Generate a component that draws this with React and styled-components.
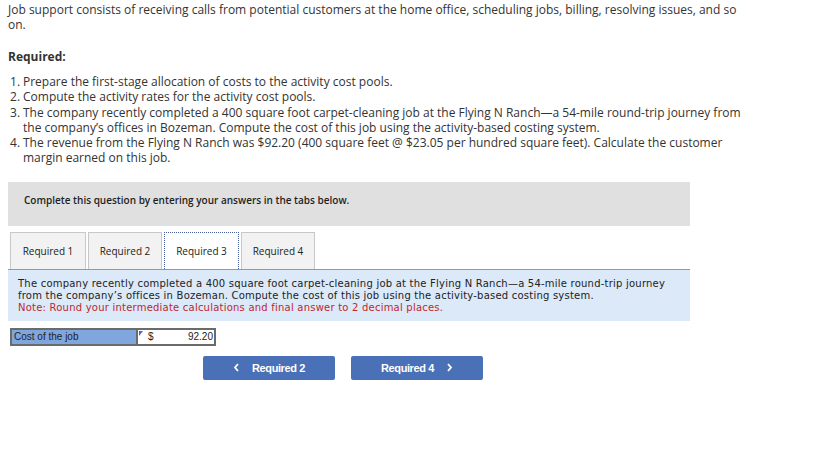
import React from "react";
import styled, { createGlobalStyle } from "styled-components";

const GlobalStyle = createGlobalStyle`
  body {
    margin: 0;
    background: #fff;
  }
`;

const Page = styled.div`
  padding: 2px 8px 20px 8px;
  font-family: "Open Sans", Lato, sans-serif;
  font-size: 12px;
  color: #333;
`;

const Intro = styled.p`
  margin: 0;
  width: 745px;
  line-height: 15px;
`;

const Heading = styled.div`
  margin-top: 17px;
  font-weight: bold;
  line-height: 15px;
`;

const List = styled.ol`
  list-style: none;
  margin: 10px 0 0 0;
  padding: 0;
  width: 745px;
`;

const Item = styled.li`
  display: flex;
  line-height: 15.3px;
`;

const Num = styled.span`
  flex: 0 0 13px;
  padding-left: 2px;
`;

const Panel = styled.div`
  width: 682px;
  margin-top: 16px;
`;

const Banner = styled.div`
  height: 44px;
  box-sizing: border-box;
  padding: 11px 0 0 16px;
  background: #e0e0e0;
  font-family: "Open Sans", sans-serif;
  font-weight: 600;
  font-size: 10px;
  color: #1e1e1e;
`;

const Tabs = styled.div`
  display: flex;
  gap: 2px;
  margin-top: 6px;
  padding-left: 2px;
`;

const Tab = styled.div`
  height: 37px;
  width: ${(p) => p.$w}px;
  box-sizing: border-box;
  display: flex;
  align-items: center;
  justify-content: center;
  background: ${(p) => (p.$active ? "#fff" : "#f2f2f2")};
  border: 1px ${(p) => (p.$active ? "dotted #4a5fa0" : "solid #c8c8c8")};
  border-bottom: none;
  font-family: "Open Sans", sans-serif;
  font-size: 10px;
  color: #222;
`;

const Content = styled.div`
  background: #dce9f8;
  border-top: 1px solid #999;
  padding: 8px 10px 7px 10px;
  font-family: "DejaVu Sans", Verdana, sans-serif;
  font-size: 10px;
  letter-spacing: 0.22px;
  line-height: 12px;
  color: #222;
`;

const Note = styled.div`
  color: #c1272d;
`;

const AnswerRow = styled.div`
  display: flex;
  margin: 7px 0 0 2px;
  height: 18px;
`;

const Label = styled.div`
  width: 127px;
  box-sizing: border-box;
  border: 2px solid #6b6b6b;
  border-right: 1px solid #6b6b6b;
  background: #7fa6dd;
  padding-left: 2px;
  display: flex;
  align-items: center;
  font-family: "Liberation Sans", Arial, sans-serif;
  font-size: 10px;
  color: #222;
`;

const InputCell = styled.div`
  position: relative;
  width: 79px;
  box-sizing: border-box;
  border: 2px solid #6b6b6b;
  border-left: 1px solid #6b6b6b;
  background: #fff;
  display: flex;
  align-items: center;
  justify-content: space-between;
  padding: 0 1px 0 10px;
  font-family: "Liberation Sans", Arial, sans-serif;
  font-size: 10px;
  color: #222;

  &::before {
    content: "";
    position: absolute;
    left: 1px;
    top: 1px;
    border-top: 5px solid #3b6fc4;
    border-right: 4px solid transparent;
  }
`;

const NavRow = styled.div`
  display: flex;
  gap: 16px;
  margin-top: 10px;
  padding-left: 195px;
`;

const NavButton = styled.button`
  width: 132px;
  height: 24px;
  border: none;
  border-radius: 2px;
  background: #4a71b8;
  color: #fff;
  display: flex;
  align-items: center;
  justify-content: center;
  gap: 12px;
  font-family: "Liberation Sans", Arial, sans-serif;
  font-weight: bold;
  font-size: 11px;
  letter-spacing: -0.4px;
  padding: 0;
  cursor: pointer;
`;

const Chevron = ({ dir }) => (
  <svg width="7" height="9" viewBox="0 0 7 9">
    <path
      d={dir === "left" ? "M5 1 L2 4.5 L5 8" : "M2 1 L5 4.5 L2 8"}
      fill="none"
      stroke="#fff"
      strokeWidth="1.8"
    />
  </svg>
);

const items = [
  "Prepare the first-stage allocation of costs to the activity cost pools.",
  "Compute the activity rates for the activity cost pools.",
  "The company recently completed a 400 square foot carpet-cleaning job at the Flying N Ranch\u2014a 54-mile round-trip journey from the company\u2019s offices in Bozeman. Compute the cost of this job using the activity-based costing system.",
  "The revenue from the Flying N Ranch was $92.20 (400 square feet @ $23.05 per hundred square feet). Calculate the customer margin earned on this job.",
];

const tabs = [
  { label: "Required 1", w: 76 },
  { label: "Required 2", w: 74 },
  { label: "Required 3", w: 75, active: true },
  { label: "Required 4", w: 74 },
];

export default function App() {
  return (
    <Page>
      <GlobalStyle />
      <Intro>
        Job support consists of receiving calls from potential customers at the home office, scheduling jobs, billing, resolving issues, and so on.
      </Intro>
      <Heading>Required:</Heading>
      <List>
        {items.map((t, i) => (
          <Item key={i}>
            <Num>{i + 1}.</Num>
            <span>{t}</span>
          </Item>
        ))}
      </List>
      <Panel>
        <Banner>Complete this question by entering your answers in the tabs below.</Banner>
        <Tabs>
          {tabs.map((t) => (
            <Tab key={t.label} $w={t.w} $active={t.active}>
              {t.label}
            </Tab>
          ))}
        </Tabs>
        <Content>
          The company recently completed a 400 square foot carpet-cleaning job at the Flying N Ranch—a 54-mile round-trip journey from the company’s offices in Bozeman. Compute the cost of this job using the activity-based costing system.
          <Note>Note: Round your intermediate calculations and final answer to 2 decimal places.</Note>
        </Content>
        <AnswerRow>
          <Label>Cost of the job</Label>
          <InputCell>
            <span>$</span>
            <span>92.20</span>
          </InputCell>
        </AnswerRow>
        <NavRow>
          <NavButton>
            <Chevron dir="left" />
            Required 2
          </NavButton>
          <NavButton>
            Required 4
            <Chevron dir="right" />
          </NavButton>
        </NavRow>
      </Panel>
    </Page>
  );
}
